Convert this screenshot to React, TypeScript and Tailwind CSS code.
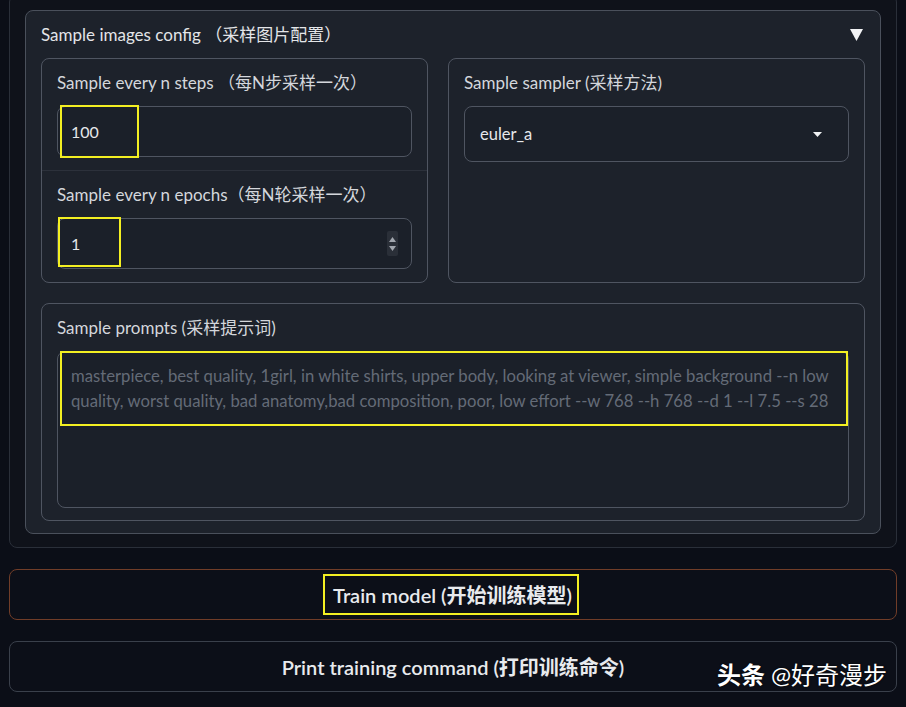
import React from "react";

const font = { fontFamily: "Lato, 'Noto Sans CJK SC', sans-serif" };

function Label({ children }: { children: React.ReactNode }) {
  return (
    <div className="h-[24px] leading-[24px] text-[17px] text-[#d4d7dc] whitespace-nowrap">
      {children}
    </div>
  );
}

function Spinner() {
  return (
    <div className="absolute right-[13px] top-[12px] w-[11px] h-[25px] rounded-[2px] bg-[#2a2f38] flex flex-col items-center justify-center gap-[4px]">
      <svg width="7" height="5" viewBox="0 0 7 5">
        <path d="M3.5 0 L7 5 L0 5 Z" fill="#a1a6ae" />
      </svg>
      <svg width="7" height="5" viewBox="0 0 7 5">
        <path d="M0 0 L7 0 L3.5 5 Z" fill="#a1a6ae" />
      </svg>
    </div>
  );
}

export default function App() {
  return (
    <div
      className="relative min-h-[707px] bg-[#0b0e17] overflow-hidden"
      style={font}
    >
      {/* outer block */}
      <div className="mx-[9px] mt-[-6px] border border-[#2a2f39] rounded-[8px] bg-[#0f121a] pt-[15px] px-[15px] pb-[13px]">
        {/* accordion panel */}
        <div className="border border-[#4a505b] rounded-[8px] bg-[#1d222b] px-[15px] pb-[12px]">
          <div className="pt-[11px] h-[37px] mb-[10px] flex items-start justify-between">
            <div className="h-[26px] leading-[26px] text-[17px] text-[#e3e5e8] whitespace-nowrap">
              Sample images config （采样图片配置）
            </div>
            <svg
              width="13"
              height="12"
              viewBox="0 0 13 12"
              className="mt-[7px] mr-[2px]"
            >
              <path d="M0 0 L13 0 L6.5 12 Z" fill="#f2f3f5" />
            </svg>
          </div>

          <div className="grid grid-cols-[387px_1fr] gap-[20px]">
            {/* left box */}
            <div className="border border-[#4f5561] rounded-[8px] flex flex-col">
              <div className="px-[15px] pt-[12px] pb-[13px] border-b border-[#2c313b]">
                <Label>Sample every n steps （每N步采样一次）</Label>
                <div className="relative mt-[11px] h-[51px] border border-[#4f5561] rounded-[8px] bg-[#1b2029] px-[13px] flex items-center text-[16px] text-[#e6e8eb]">
                  100
                  <div className="absolute left-[2px] top-[-2px] w-[79px] h-[53px] border-2 border-[#f3ef22]" />
                </div>
              </div>
              <div className="px-[15px] pt-[12px] pb-[13px]">
                <Label>Sample every n epochs（每N轮采样一次）</Label>
                <div className="relative mt-[11px] h-[51px] border border-[#4f5561] rounded-[8px] bg-[#1b2029] px-[13px] flex items-center text-[16px] text-[#e6e8eb]">
                  1
                  <Spinner />
                  <div className="absolute left-[0px] top-[-2px] w-[63px] h-[50px] border-2 border-[#f3ef22]" />
                </div>
              </div>
            </div>

            {/* right box */}
            <div className="border border-[#4f5561] rounded-[8px] px-[15px] pt-[12px]">
              <Label>Sample sampler (采样方法)</Label>
              <div className="mt-[11px] h-[56px] border border-[#4f5561] rounded-[8px] bg-[#1b2029] pl-[15px] pr-[26px] flex items-center justify-between text-[16.5px] text-[#e6e8eb]">
                <span>euler_a</span>
                <svg width="9" height="5" viewBox="0 0 9 5">
                  <path d="M0 0 L9 0 L4.5 5 Z" fill="#f0f1f3" />
                </svg>
              </div>
            </div>
          </div>

          {/* prompts box */}
          <div className="mt-[20px] border border-[#4f5561] rounded-[8px] px-[15px] pt-[12px] pb-[12px]">
            <Label>Sample prompts (采样提示词)</Label>
            <div className="relative mt-[11px] h-[157px] border border-[#4f5561] rounded-[8px] bg-[#1b2029] px-[13px] pt-[12px] text-[16.7px] leading-[25px] text-[#646b77]">
              <div className="whitespace-nowrap">
                masterpiece, best quality, 1girl, in white shirts, upper body, looking at viewer, simple background --n low
              </div>
              <div className="whitespace-nowrap">
                quality, worst quality, bad anatomy,bad composition, poor, low effort --w 768 --h 768 --d 1 --l 7.5 --s 28
              </div>
              <div className="absolute left-[2px] top-[-1px] w-[788px] h-[75px] border-2 border-[#f3ef22]" />
            </div>
          </div>
        </div>
      </div>

      {/* Train button */}
      <div className="mx-[9px] mt-[21px] h-[51px] border border-[#713d28] rounded-[8px] bg-[#0c0f18] flex items-center justify-center">
        <span className="ml-[-4px] h-[41px] pl-[8px] pr-[5px] border-2 border-[#f3ef22] flex items-center text-[20px] font-semibold text-[#e8eaed] whitespace-nowrap">
          Train model (<span className="font-bold">开始训练模型</span>)
        </span>
      </div>

      {/* Print button */}
      <div className="mx-[9px] mt-[21px] h-[51px] border border-[#3a404b] rounded-[8px] bg-[#0c0f18] flex items-center justify-center">
        <span className="text-[20px] font-semibold text-[#e8eaed] whitespace-nowrap">
          Print training command (<span className="font-bold">打印训练命令</span>)
        </span>
      </div>

      {/* watermark */}
      <div className="absolute left-[717px] top-[660px] h-[30px] flex items-center text-[24px] text-white whitespace-nowrap [text-shadow:0_0_2px_rgba(0,0,0,0.8)]">
        <span className="font-bold">头条</span>
        <span className="ml-[6px]">@好奇漫步</span>
      </div>
    </div>
  );
}
